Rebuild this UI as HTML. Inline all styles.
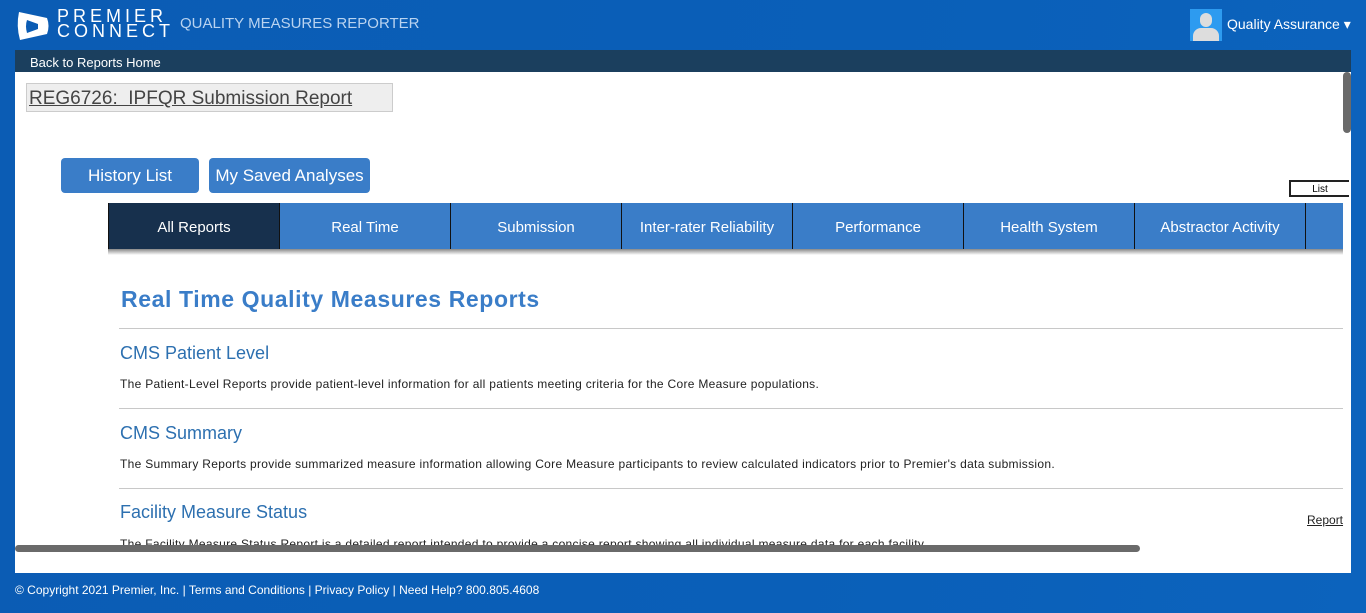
<!DOCTYPE html>
<html><head><style>
*{margin:0;padding:0;box-sizing:border-box}
body{width:1366px;height:613px;overflow:hidden;background:linear-gradient(100deg,#0b5cb4,#0a5fb8 60%,#0c63bd);font-family:"Liberation Sans",sans-serif;position:relative}
.abs{position:absolute}
.tab{position:absolute;top:203px;height:46px;width:171px;background:#3a7dc8;color:#fff;font-size:15px;text-align:center;line-height:50px;border-left:1px solid #111}
h2{position:absolute;left:121px;top:286px;font-size:23px;color:#3a7dc8;font-weight:bold;letter-spacing:0.6px}
.sec{position:absolute;left:120px;color:#2d70b0;font-size:18px}
.desc{position:absolute;left:120px;font-size:12px;color:#222;letter-spacing:0.3px}
.hr{position:absolute;left:119px;width:1224px;height:1px;background:#c8c8c8}
</style></head><body>
<svg class="abs" style="left:16px;top:10px" width="34" height="32" viewBox="0 0 34 32"><path d="M3 2 L31 8 Q34 16 31 24 L4 30 Q0 16 3 2Z" fill="#fff"/><path d="M11 10 L22 14 L22 19 L11 23 Q9 16 11 10Z" fill="#0b5cb4"/></svg>
<div class="abs" style="left:57px;top:9px;color:#fff;font-size:18px;letter-spacing:4px;line-height:15px">PREMIER<br>CONNECT</div>
<div class="abs" style="left:180px;top:15px;color:#b9d3f0;font-size:15px">QUALITY MEASURES REPORTER</div>
<div class="abs" style="left:1190px;top:9px;width:32px;height:32px;background:#2d9bf0;overflow:hidden"><div class="abs" style="left:10px;top:4px;width:12px;height:14px;border-radius:6px;background:#ddd"></div><div class="abs" style="left:3px;top:19px;width:26px;height:16px;border-radius:8px 8px 0 0;background:#ddd"></div></div>
<div class="abs" style="left:1227px;top:16px;color:#fff;font-size:14px">Quality Assurance ▾</div>
<div class="abs" style="left:15px;top:50px;width:1336px;height:22px;background:#1b3f5e;color:#fff;font-size:13px;padding:5px 0 0 15px">Back to Reports Home</div>
<div class="abs" style="left:15px;top:72px;width:1336px;height:501px;background:#fff;overflow:hidden">
<div class="abs" style="left:11px;top:11px;width:367px;height:29px;background:#eee;border:1px solid #ccc;font-size:19px;color:#444;text-decoration:underline;padding:4px 0 0 2px">REG6726:&nbsp; IPFQR Submission Report</div>
<div class="abs" style="left:46px;top:86px;width:138px;height:35px;background:#3a7dc8;border-radius:4px;color:#fff;font-size:17px;text-align:center;line-height:36px">History List</div>
<div class="abs" style="left:194px;top:86px;width:161px;height:35px;background:#3a7dc8;border-radius:4px;color:#fff;font-size:17px;text-align:center;line-height:36px">My Saved Analyses</div>
<div class="abs" style="left:1274px;top:108px;width:60px;height:17px;border:2px solid #222;border-right:none;font-size:10px;text-align:center;line-height:16px">List</div>
<div class="abs" style="left:93px;top:177px;width:1235px;height:6px;background:linear-gradient(#888,#fff)"></div>
<div class="abs" style="left:1328px;top:0;width:8px;height:61px;background:#6a6a6a;border-radius:4px"></div>
<div class="abs" style="left:0;top:473px;width:1125px;height:7px;background:#6a6a6a;border-radius:4px"></div>
<div class="abs" style="left:1292px;top:441px;font-size:12px;text-decoration:underline;color:#222">Report</div>
</div>
<div class="tab" style="left:108px;background:#17304d">All Reports</div>
<div class="tab" style="left:279px">Real Time</div>
<div class="tab" style="left:450px">Submission</div>
<div class="tab" style="left:621px">Inter-rater Reliability</div>
<div class="tab" style="left:792px">Performance</div>
<div class="tab" style="left:963px">Health System</div>
<div class="tab" style="left:1134px">Abstractor Activity</div>
<div class="tab" style="left:1305px;width:38px"></div>
<h2>Real Time Quality Measures Reports</h2>
<div class="hr" style="top:328px"></div>
<div class="sec" style="top:343px">CMS Patient Level</div>
<div class="desc" style="top:377px">The Patient-Level Reports provide patient-level information for all patients meeting criteria for the Core Measure populations.</div>
<div class="hr" style="top:408px"></div>
<div class="sec" style="top:423px">CMS Summary</div>
<div class="desc" style="top:457px">The Summary Reports provide summarized measure information allowing Core Measure participants to review calculated indicators prior to Premier's data submission.</div>
<div class="hr" style="top:488px"></div>
<div class="sec" style="top:502px">Facility Measure Status</div>
<div class="desc" style="top:537px;height:8px;overflow:hidden">The Facility Measure Status Report is a detailed report intended to provide a concise report showing all individual measure data for each facility.</div>
<div class="abs" style="left:15px;top:583px;color:#fff;font-size:12px">© Copyright 2021 Premier, Inc. | Terms and Conditions | Privacy Policy | Need Help? 800.805.4608</div>
</body></html>
